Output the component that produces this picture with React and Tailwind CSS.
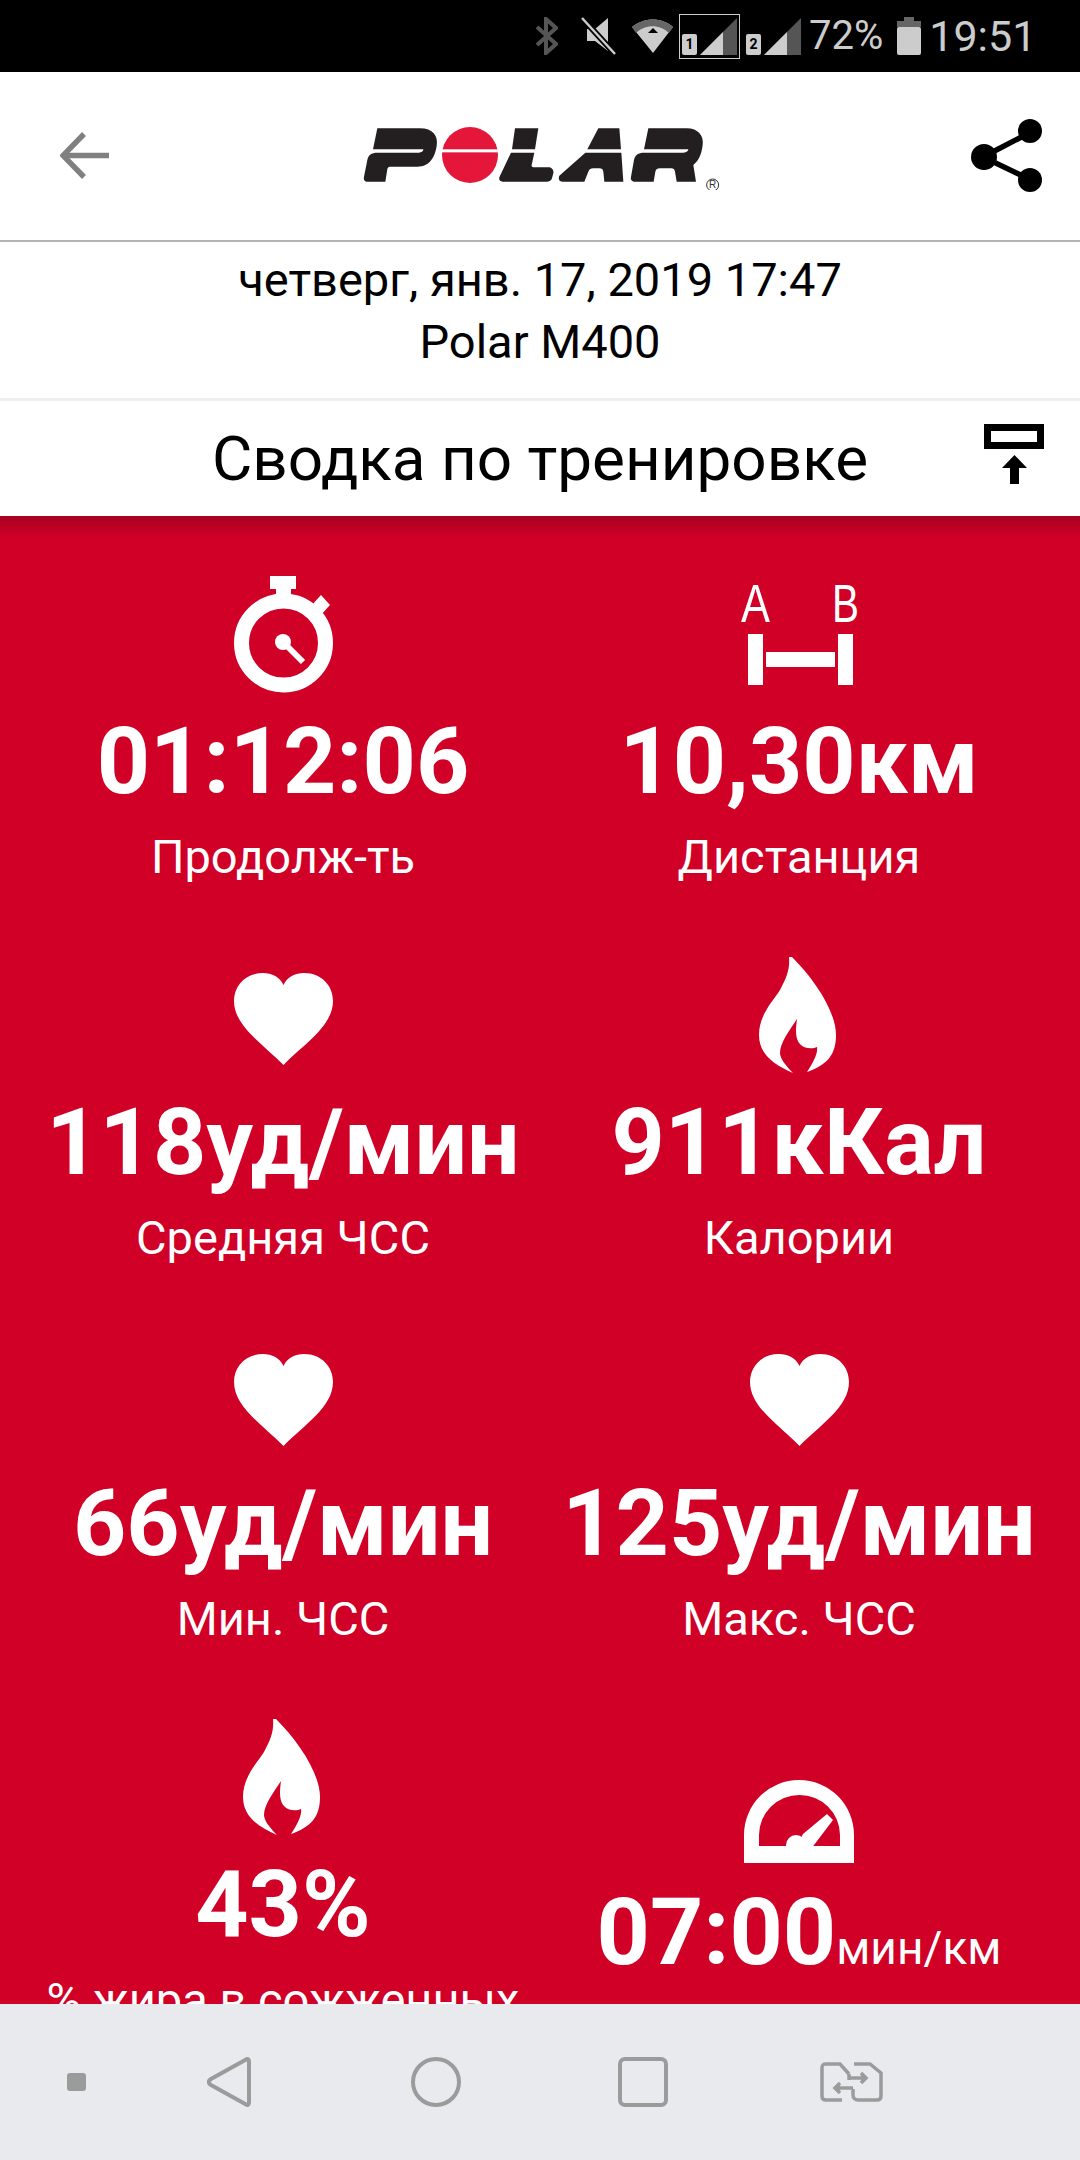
const font = { fontFamily: "Roboto, 'Noto Sans', sans-serif" };

function Stopwatch() {
  return (
    <svg width="120" height="130" viewBox="0 0 120 130" fill="none">
      <rect x="47" y="6" width="26" height="13" fill="#fff" />
      <rect x="53" y="17" width="15" height="10" fill="#fff" />
      <path d="M88 36 L98 25 L107 35 L97 46 Z" fill="#fff" />
      <circle cx="60.5" cy="73" r="42" stroke="#fff" strokeWidth="15" />
      <circle cx="60" cy="72" r="8" fill="#fff" />
      <path d="M60 72 L80 92" stroke="#fff" strokeWidth="6" />
    </svg>
  );
}

function AB() {
  return (
    <svg width="140" height="130" viewBox="0 0 140 130">
      <text x="12" y="52" fill="#fff" fontSize="54" textLength="29" lengthAdjust="spacingAndGlyphs" style={{ fontFamily: "'Liberation Sans', sans-serif" }}>A</text>
      <text x="103" y="52" fill="#fff" fontSize="54" textLength="27" lengthAdjust="spacingAndGlyphs" style={{ fontFamily: "'Liberation Sans', sans-serif" }}>B</text>
      <rect x="19" y="64" width="15" height="51" fill="#fff" />
      <rect x="109" y="64" width="15" height="51" fill="#fff" />
      <rect x="37" y="82" width="69" height="15" fill="#fff" />
    </svg>
  );
}

function Heart() {
  return (
    <svg width="120" height="130" viewBox="0 0 120 130">
      <path d="M60.5 34 C57 26 49 22 40 22 C22 22 11 35 11 50 C11 75 40 93 60.5 114 C81 93 110 75 110 50 C110 35 99 22 81 22 C72 22 64 26 60.5 34 Z" fill="#fff" />
    </svg>
  );
}

function Flame() {
  return (
    <svg width="120" height="130" viewBox="0 0 120 130">
      <path d="M50 6 L53 6 C75 28 97 60 97 84 C97 104 88 114 68 121 C75 110 79 102 78 96 C74 98 66 98 62 94 C57 90 56 82 58 68 C50 80 41 92 41 102 C41 108 48 116 54 122 C36 114 20 104 20 84 C20 64 34 50 41 39 C48 26 51 18 50 6 Z" fill="#fff" />
    </svg>
  );
}

function Gauge() {
  return (
    <svg width="120" height="130" viewBox="0 0 120 130">
      <path fillRule="evenodd" d="M5 122 V94 A55 55 0 0 1 115 94 V122 Z M20 105 H101 V94 A40.5 40 0 0 0 20 94 Z" fill="#fff" />
      <circle cx="57" cy="104" r="10" fill="#fff" />
      <path d="M64 93 L88 73 L94 79 L73.5 106 H57 Z" fill="#fff" />
    </svg>
  );
}

function Metric({ icon, value, unit, label, low }) {
  return (
    <div className={low ? "flex flex-col items-center pt-[82px]" : "flex flex-col items-center pt-[54px]"}>
      <div className="flex h-[130px] items-center justify-center">{icon}</div>
      <div className="mt-[12px] h-[100px] whitespace-nowrap text-[93px] leading-[100px] font-bold text-white">
        {value}
        {unit && <span className="text-[46px] font-normal">{unit}</span>}
      </div>
      {label && <div className="mt-[15px] w-[500px] text-center text-[47px] leading-[60px] whitespace-nowrap text-white">{label}</div>}
    </div>
  );
}

function Sim({ n }) {
  return (
    <div className="relative h-[21px] w-[15px] rounded-[2px] bg-[#cccccc] text-center text-[14px] leading-[21px] font-bold text-black">{n}</div>
  );
}

function Bars() {
  return (
    <svg className="ml-[3px]" width="37" height="37" viewBox="0 0 37 37">
      <path d="M0 37 L37 0 V37 Z" fill="#555555" />
      <path d="M0 37 L23 14 V37 Z" fill="#cccccc" />
    </svg>
  );
}

function StatusBar() {
  return (
    <div className="flex h-[72px] shrink-0 items-center bg-black pl-[535px] text-[40px] leading-[72px] text-[#cccccc]">
      <svg width="23" height="38" viewBox="0 0 23 38" fill="none" stroke="#555555" strokeWidth="4">
        <path d="M2 10 L21 27 L11 36 V2 L21 11 L2 28" />
      </svg>
      <svg className="ml-[23px]" width="36" height="38" viewBox="0 0 36 38">
        <path d="M6 12 H14 L27 1 V34 L14 24 H6 Z" fill="#cccccc" />
        <path d="M1 1 L34 37" stroke="#000" strokeWidth="6" />
        <path d="M1 1 L34 37" stroke="#cccccc" strokeWidth="2.5" />
      </svg>
      <svg className="ml-[15px]" width="42" height="36" viewBox="0 0 42 36">
        <path d="M0 9 C12 -1 30 -1 41 9 L21 35 Z" fill="#cccccc" />
        <path d="M0 9 C12 -1 30 -1 41 9 L37 15 C28 6 13 6 4 15 Z" fill="#666666" />
        <path d="M21 10 L26 15 H16 Z" fill="#000" />
      </svg>
      <div className="ml-[5px] flex h-[45px] w-[61px] items-end border border-[#cccccc] pb-[3px] pl-[2px]">
        <Sim n="1" />
        <Bars />
      </div>
      <div className="ml-[6px] flex h-[45px] items-end pb-[4px]">
        <Sim n="2" />
        <Bars />
      </div>
      <span className="ml-[8px] whitespace-nowrap">72%</span>
      <svg className="ml-[14px]" width="24" height="38" viewBox="0 0 24 38">
        <rect x="7" y="0" width="10" height="5" fill="#666666" />
        <rect x="0" y="4" width="24" height="6" fill="#666666" />
        <rect x="0" y="10" width="24" height="28" rx="2" fill="#cccccc" />
      </svg>
      <span className="ml-[8px] whitespace-nowrap text-[43px]">19:51</span>
    </div>
  );
}

function Logo() {
  return (
    <svg width="400" height="80" viewBox="0 0 1200 240">
      <g fill="#231f20">
        <path d="M112 55 H240 C278 55 296 78 290 108 C285 140 270 170 232 170 H150 C145 170 143 173 142 178 L136 215 H84 C74 215 70 210 72 200 L82 150 C85 135 94 128 112 128 H236 C246 128 250 123 250 118 H99 Z" />
        <path d="M525 55 H595 L585 118 H516 Z" />
        <path d="M513 128 H583 L575 165 C574 170 577 172 582 172 H625 C635 172 642 180 640 190 L636 205 C634 212 628 215 620 215 H488 C480 215 476 210 478 202 Z" />
        <path d="M775 55 H838 L843 118 H742 Z" />
        <path d="M736 128 H844 L850 215 H793 L790 185 C789 178 785 175 778 175 H760 C752 175 748 178 745 185 L733 215 H668 C658 215 654 206 658 197 Z" />
        <path d="M925 55 H1040 C1075 55 1092 78 1088 105 C1085 130 1078 150 1060 165 L1068 215 H1010 L1005 185 C1004 178 1000 175 994 175 H960 C952 175 948 178 946 185 L941 215 H885 C875 215 871 208 873 200 L882 150 C885 135 895 128 912 128 H1030 C1040 128 1045 123 1045 118 H912 Z" />
      </g>
      <circle cx="390" cy="135" r="84" fill="#e4173a" />
      <rect x="300" y="118" width="180" height="9" fill="#fff" />
      <circle cx="1118" cy="225" r="18" fill="none" stroke="#333" strokeWidth="3" />
      <text x="1118" y="235" textAnchor="middle" fontSize="30" fill="#333" style={{ fontFamily: "'Liberation Sans', sans-serif" }}>R</text>
    </svg>
  );
}

function Header() {
  return (
    <div className="flex h-[168px] shrink-0 items-start bg-white pl-[60px] pr-[37px]">
      <svg className="mt-[60px]" width="49" height="47" viewBox="0 0 49 47" fill="none" stroke="#808080" strokeWidth="5.5">
        <path d="M24 2 L3 23.5 L24 45" />
        <path d="M3 23.5 H49" />
      </svg>
      <div className="ml-[231px] mt-[38px]"><Logo /></div>
      <svg className="ml-auto mt-[47px]" width="72" height="74" viewBox="0 0 72 74" fill="#000">
        <path d="M60 13 L12 38 L60 61" fill="none" stroke="#000" strokeWidth="5.5" />
        <circle cx="59" cy="12" r="12" />
        <circle cx="13" cy="38" r="13" />
        <circle cx="59" cy="61" r="12" />
      </svg>
    </div>
  );
}

function Nav() {
  return (
    <div className="flex h-[156px] shrink-0 items-center bg-[#e9eaee] pl-[67px]">
      <div className="h-[18px] w-[19px] rounded-[3px] bg-[#9b9b9b]" />
      <svg className="ml-[121px]" width="44" height="50" viewBox="0 0 44 50" fill="none" stroke="#9b9b9b" strokeWidth="4">
        <path d="M40 2 C41 2 42 3 42 5 V45 C42 47 41 48 40 48 L4 28 C1 26 1 24 4 22 Z" />
      </svg>
      <svg className="ml-[160px]" width="50" height="50" viewBox="0 0 50 50" fill="none" stroke="#9b9b9b" strokeWidth="4">
        <circle cx="25" cy="25" r="23" />
      </svg>
      <svg className="ml-[157px]" width="50" height="50" viewBox="0 0 50 50" fill="none" stroke="#9b9b9b" strokeWidth="4">
        <rect x="2" y="2" width="46" height="46" rx="5" />
      </svg>
      <svg className="ml-[152px]" width="63" height="40" viewBox="0 0 63 40" fill="none" stroke="#9b9b9b" strokeWidth="3.5">
        <path d="M22 38 H6 C3 38 2 36 2 34 V6 C2 3 3 2 6 2 H20 L29 12" />
        <path d="M34 2 H50 L61 11 V34 C61 36 60 38 57 38 H38 C35 38 33 36 33 33 V27" />
        <path d="M29 12 V18" />
        <path d="M28 16 H44" />
        <path d="M41 11 L46 16 L41 21" fill="#9b9b9b" />
        <path d="M33 26 H17" />
        <path d="M20 21 L15 26 L20 31" fill="#9b9b9b" />
      </svg>
    </div>
  );
}

export default function App() {
  return (
    <div className="flex h-[2160px] w-[1080px] flex-col overflow-hidden bg-white" style={font}>
      <StatusBar />
      <Header />
      <div className="h-[2px] shrink-0 bg-[#b4b4b4]" />
      <div className="h-[156px] shrink-0 pt-[7px] text-center text-[47px] leading-[62px] text-black">
        <div>четверг, янв. 17, 2019 17:47</div>
        <div>Polar M400</div>
      </div>
      <div className="h-[3px] shrink-0 bg-[#eeeeee]" />
      <div className="relative flex h-[115px] shrink-0 items-center justify-center text-[62px] text-black">
        Сводка по тренировке
        <svg className="absolute left-[984px] top-[23px]" width="60" height="63" viewBox="0 0 60 63">
          <rect x="3.5" y="3.5" width="53" height="18" fill="none" stroke="#000" strokeWidth="7" />
          <path d="M30.5 31 L43 44 H35 V60 H26 V44 H18 Z" fill="#000" />
        </svg>
      </div>
      <div className="relative min-h-0 flex-1 overflow-hidden bg-[#d00027]">
        <div className="absolute inset-x-0 top-0 h-[22px] bg-gradient-to-b from-[#a80020] to-[#d00027]" />
        <div className="relative grid grid-cols-2 auto-rows-[381px] pl-[25px] pr-[23px]">
          <Metric icon={<Stopwatch />} value="01:12:06" label="Продолж-ть" />
          <Metric icon={<AB />} value="10,30км" label="Дистанция" />
          <Metric icon={<Heart />} value="118уд/мин" label="Средняя ЧСС" />
          <Metric icon={<Flame />} value="911кКал" label="Калории" />
          <Metric icon={<Heart />} value="66уд/мин" label="Мин. ЧСС" />
          <Metric icon={<Heart />} value="125уд/мин" label="Макс. ЧСС" />
          <Metric icon={<Flame />} value="43%" label="% жира в сожженных" />
          <Metric icon={<Gauge />} value="07:00" unit="мин/км" low />
        </div>
      </div>
      <Nav />
    </div>
  );
}
